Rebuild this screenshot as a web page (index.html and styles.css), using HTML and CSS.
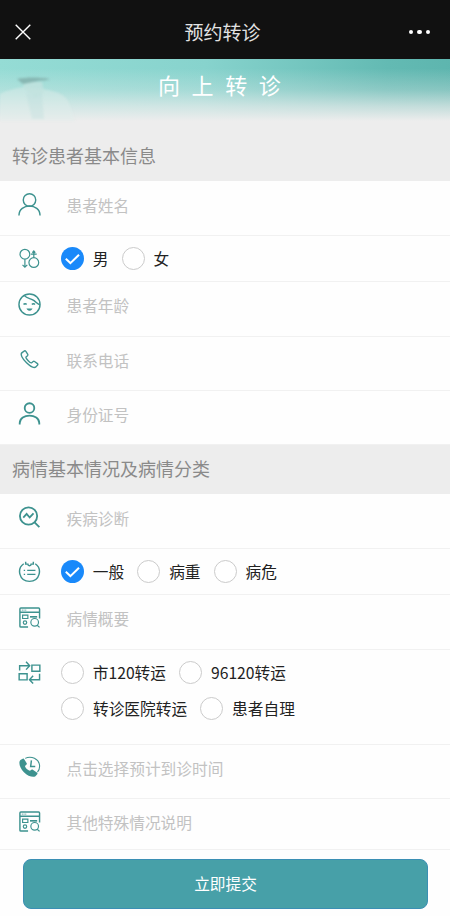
FILE: index.html
```html
<!DOCTYPE html>
<html lang="zh-CN">
<head>
<meta charset="utf-8">
<meta name="viewport" content="width=device-width, initial-scale=1">
<title>预约转诊</title>
<link rel="stylesheet" href="styles.css">
</head>
<body>
<svg class="sprite" aria-hidden="true">
  <symbol id="report" viewBox="0 0 24 24">
    <path d="M10.500 22H3a1 1 0 0 1-1-1V3a1 1 0 0 1 1-1h18.500a1 1 0 0 1 1 1v10M2 6.500h20.500" stroke-width="1.500"/>
    <path d="M4 4.300h5" stroke-width="1" stroke-dasharray="1 .8"/>
    <path d="M4.800 9.500h5.500v3.500H4.800z" stroke-width="1.200"/>
    <path d="M12.500 11.300h7.500" stroke-width="1.700"/>
    <circle cx="7.300" cy="17.300" r="1.800" stroke-width="1.200"/>
    <circle cx="17.400" cy="17" r="4" stroke-width="1.200"/>
    <path d="m20 20 2.500 2.300" stroke-width="1.300"/>
  </symbol>
  <symbol id="check" viewBox="0 0 24 24">
    <path d="m5 12.300 4.800 4.500 9-8.800" stroke-width="2.100"/>
  </symbol>
</svg>

<header class="topbar">
  <svg class="close" viewBox="0 0 16 16"><path d="m.7.7 14.600 14.600M15.300.7.7 15.300"/></svg>
  <h1>预约转诊</h1>
  <span class="more"><i></i><i></i><i></i></span>
</header>

<section class="banner">
  <svg class="doctor" viewBox="0 0 80 62" aria-hidden="true">
    <path class="coat" d="M0 35c8-4 16-6 24-7l18 2c15 2 24 6 27 14l6 18H0z"/>
    <path class="face" d="M22 23h20l2 10-9 5-9-6z"/>
    <path class="mask" d="M17 20c10-2 21-2 33 0-4 2-8 1-12 2l-15 3z"/>
    <path class="shade" d="m26 34 8 3 8-3 2 26H32z"/>
  </svg>
  <h2>向上转诊</h2>
</section>

<main>
  <h3 class="section-title first">转诊患者基本信息</h3>
  <div class="row lower">
    <svg class="icon" viewBox="0 0 24 24"><circle cx="12" cy="7.300" r="6.500"/><path d="M1 23.500C1 10.200 23 10.200 23 23.500"/></svg>
    <span class="hint">患者姓名</span>
  </div>
  <div class="row choice">
    <svg class="icon thin" viewBox="0 0 24 24"><circle cx="7.200" cy="7.500" r="5.100"/><circle cx="16.500" cy="16.200" r="5.100"/><path d="M7.200 12.700v7.800m-2.500-1.800 2.500 2.300 2.500-2.300M16.500 11V4.500m-3 3h6M15 6l1.500-1.800L18 6"/></svg>
    <div class="options">
      <span class="option"><span class="radio on"><svg><use href="#check"/></svg></span>男</span>
      <span class="option"><span class="radio"></span>女</span>
    </div>
  </div>
  <div class="row">
    <svg class="icon" viewBox="0 0 24 24"><circle cx="12" cy="12" r="11"/><path d="M6.800 2.700c2.500 3.300 6.500 2.700 10 5.300 2.300 1.800 3.500 4 6 4.300M5.800 12c.8-1 2.400-1 3.200 0m5.500 0c.8-1 2.400-1 3.200 0M10.300 17c.9 1.200 2.500 1.200 3.400 0z"/></svg>
    <span class="hint">患者年龄</span>
  </div>
  <div class="row short">
    <svg class="icon phone" viewBox="0 0 24 24"><path d="M4.200 4.800 6.800 3c.5-.3 1 0 1.400.5l2 3.200c.3.500.1 1-.3 1.400l-1.500 1.200c-.5.600.3 2 2 3.700 1.700 1.800 3.300 2.800 3.900 2.300l1.500-1.200c.5-.3 1-.3 1.500 0l3 2.200c.5.400.6 1 .2 1.400l-1.800 2c-1.600 1.300-5.700-.2-9.800-4.200-4.400-4.400-7-9-4.700-10.700z"/></svg>
    <span class="hint">联系电话</span>
  </div>
  <div class="row short">
    <svg class="icon bold" viewBox="0 0 24 24"><circle cx="12" cy="6.300" r="5"/><path d="M1.800 23.500V22c0-10.500 20.400-10.500 20.400 0v1.500"/></svg>
    <span class="hint">身份证号</span>
  </div>

  <h3 class="section-title">病情基本情况及病情分类</h3>
  <div class="row lower">
    <svg class="icon bold" viewBox="0 0 24 24"><circle cx="11" cy="10.500" r="9"/><path d="m17.300 17 5 5M5.500 12.200l3.500-3.900 3.200 3.700 4-4.200"/></svg>
    <span class="hint">疾病诊断</span>
  </div>
  <div class="row choice">
    <svg class="icon" viewBox="0 0 24 24"><path d="M6 3.900C-1.500 9 1 22.300 12 22.300S25.500 9 18 3.900"/><path d="M8 1.800v2.500h2.300c0 2.300 3.400 2.300 3.400 0H16V1.800M6 10.800h1.400m2.200 0h8.600M6 15h1.400m2.200 0h8.600"/></svg>
    <div class="options">
      <span class="option"><span class="radio on"><svg><use href="#check"/></svg></span>一般</span>
      <span class="option"><span class="radio"></span>病重</span>
      <span class="option"><span class="radio"></span>病危</span>
    </div>
  </div>
  <div class="row">
    <svg class="icon"><use href="#report"/></svg>
    <span class="hint">病情概要</span>
  </div>
  <div class="row transport">
    <svg class="icon" viewBox="0 0 24 24"><path d="M1.700 10V5h10M8.400.8l3.800 4.200-3.800 4M14.500 4.300h8.300v6.400h-8.300zM1.200 13.300h8.300v6.400H1.200zM22.500 13.200V19.500H13M15.800 15.400l-3.800 4.100 3.800 4"/></svg>
    <div class="options">
      <span class="option"><span class="radio"></span>市120转运</span>
      <span class="option"><span class="radio"></span>96120转运</span>
      <span class="option"><span class="radio"></span>转诊医院转运</span>
      <span class="option"><span class="radio"></span>患者自理</span>
    </div>
  </div>
  <div class="row short">
    <svg class="icon" viewBox="0 0 24 24"><path class="solid" d="M3 4 5 2.800c.6-.3 1.200 0 1.500.5l2.600 4.200c.3.600.1 1.200-.4 1.600L7.300 10.400c.3 1.900 3 4.500 5.200 5l1.500-1.100c.5-.3 1-.3 1.500 0l4.500 3.200c.5.500.5 1 .1 1.500l-1.900 2.200c-2.400 1.600-8.100-.2-12-4.200C1.500 12.500 0 5.800 3 4z"/><path d="M7.500 2.500c6-3 14.700.2 15.100 8 0 2.700-.8 4.700-2.300 6.200" stroke-width="1.100"/><path d="m14 4.500-.8 6.500h4.800"/></svg>
    <span class="hint">点击选择预计到诊时间</span>
  </div>
  <div class="row last">
    <svg class="icon"><use href="#report"/></svg>
    <span class="hint">其他特殊情况说明</span>
  </div>
</main>

<footer><button class="submit" type="button">立即提交</button></footer>
</body>
</html>
```
FILE: styles.css
```css
* {
  box-sizing: border-box;
}

body {
  margin: 0;
  height: 916px;
  overflow: hidden;
  background: #fefefe;
  font-family: "Noto Sans CJK SC", sans-serif;
  font-size: 15.7px;
  color: #222;
}

h1, h2, h3 {
  margin: 0;
  font-weight: 400;
}

svg {
  fill: none;
  stroke: currentColor;
}

.sprite {
  display: none;
}

.topbar {
  display: grid;
  grid-template-columns: 60px 1fr 60px;
  align-items: center;
  height: 59px;
  padding: 5px 20px 0 15px;
  background: #111;
  color: #fff;
}

.topbar h1 {
  font-size: 19px;
  line-height: 28px;
  text-align: center;
  color: #e2e2e2;
}

.close {
  width: 16px;
  height: 16px;
  stroke-width: 1.4;
}

.more {
  display: flex;
  justify-content: flex-end;
  gap: 4px;
}

.more i {
  width: 4.5px;
  height: 4.5px;
  border-radius: 50%;
  background: #fff;
}

.banner {
  position: relative;
  height: 62px;
  background:
    linear-gradient(to bottom, rgba(237, 237, 237, 0) 15%, rgba(237, 237, 237, .3) 50%, rgba(237, 237, 237, .7) 76%, #ededed 100%),
    linear-gradient(97deg, #95dcd5 0%, #87d3cd 45%, #63bab3 85%, #5db5ae 100%);
}

.banner h2 {
  position: relative;
  padding: 9px 0 0 158px;
  font-size: 22px;
  line-height: 32px;
  letter-spacing: 11.6px;
  color: #fff;
}

.doctor {
  position: absolute;
  left: 0;
  top: 0;
  width: 80px;
  height: 62px;
  stroke: none;
  filter: blur(1px);
}

.coat {
  fill: #e0eeec;
  opacity: .45;
}

.face {
  fill: #c2e2df;
  opacity: .8;
}

.mask {
  fill: #86b5b1;
  opacity: .95;
}

.shade {
  fill: #b5dad6;
  opacity: .3;
}

.section-title {
  height: 49px;
  padding-left: 12px;
  background: #ededed;
  font-size: 18px;
  line-height: 47px;
  color: #8a8a8a;
}

.section-title.first {
  height: 60px;
  padding-top: 11px;
}

.row {
  display: flex;
  align-items: flex-start;
  height: 55px;
  padding-left: 18px;
  border-bottom: 1px solid #f1f1f1;
}

.row.short {
  height: 54px;
}

.row.choice {
  height: 46px;
}

.row.transport {
  height: 95px;
}

.row.last {
  height: 51px;
}

.icon {
  flex: none;
  width: 23px;
  height: 23px;
  margin-top: 11px;
  stroke-width: 1.5;
  color: #3d928f;
}

.row.lower .icon {
  margin-top: 12px;
}

.icon.thin {
  stroke-width: 1.25;
}

.icon.phone {
  stroke-width: 1.4;
}

.icon.bold {
  stroke-width: 1.9;
}

.solid {
  fill: currentColor;
  stroke: none;
}

.hint {
  margin-left: 25.5px;
  line-height: 48px;
  color: #c2c2c2;
}

.row.lower .hint {
  line-height: 49px;
}

.options {
  display: flex;
  flex-wrap: wrap;
  gap: 13px;
  width: 300px;
  margin: 11px 0 0 20px;
}

.option {
  display: flex;
  align-items: center;
  gap: 8.800px;
  height: 23px;
  line-height: 21px;
}

.option + .option {
  margin-left: .2px;
}

.radio {
  width: 23px;
  height: 23px;
  border: 1px solid #cbcbcb;
  border-radius: 50%;
  background: #fff;
}

.radio.on {
  border: 0;
  background: #1989fa;
  color: #fff;
}

.radio svg {
  display: block;
  width: 23px;
  height: 23px;
}

footer {
  padding: 9px 22px 0 23px;
}

.submit {
  display: block;
  width: 100%;
  height: 50px;
  padding: 0;
  border: 1px solid #3b8fb4;
  border-radius: 8px;
  background: #47a0a8;
  font: inherit;
  line-height: 46px;
  color: #fff;
}
```
